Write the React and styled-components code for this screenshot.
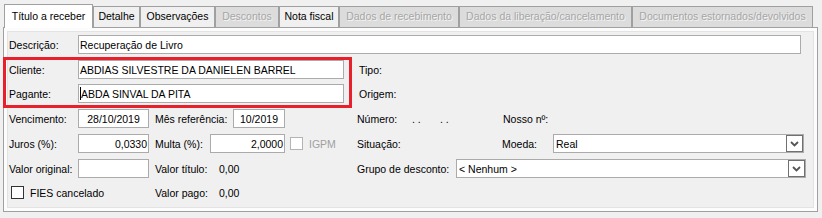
import React from "react";
import styled, { createGlobalStyle } from "styled-components";

const GlobalStyle = createGlobalStyle`
  body {
    margin: 0;
    background: #f0f0f0;
    font-family: "Liberation Sans", Arial, sans-serif;
    font-size: 10.5px;
    color: #000;
  }
`

const Tela = styled.div`
  position: relative;
  width: 822px;
  height: 218px;
  box-sizing: border-box;
  padding: 4px 0 0 3px;
`

const BarraAbas = styled.div`
  display: flex;
  align-items: flex-end;
  height: 23px;
  padding-left: 1px;
  position: relative;
  z-index: 1;
`

const Aba = styled.div`
  box-sizing: border-box;
  width: ${(p) => p.$w}px;
  height: ${(p) => (p.$ativa ? 24 : 21)}px;
  margin-bottom: ${(p) => (p.$ativa ? -1 : 0)}px;
  border: 1px solid #a0a0a0;
  border-bottom: none;
  background: ${(p) => (p.$ativa ? "#ffffff" : p.$desabilitada ? "#dcdcdc" : "#f0f0f0")};
  color: ${(p) => (p.$desabilitada ? "#a6a6a6" : "#000")};
  text-shadow: ${(p) => (p.$desabilitada ? "1px 1px 0 #f4f4f4" : "none")};
  display: flex;
  align-items: center;
  justify-content: center;
  padding-bottom: 2px;
  white-space: nowrap;
`

const Painel = styled.div`
  box-sizing: border-box;
  width: 815px;
  height: 185px;
  border: 1px solid #a0a0a0;
  padding: 3px;
  background: #fcfcfc;
`

const Conteudo = styled.div`
  box-sizing: border-box;
  height: 100%;
  border: 1px solid #e3e3e3;
  background: #f0f0f0;
  padding: 3px 0 0 1px;
  display: flex;
  flex-direction: column;
  gap: 6px;
`

const Linha = styled.div`
  display: flex;
  align-items: center;
  height: 19px;
  margin-top: ${(p) => (p.$justa ? -1 : 0)}px;
`

const Rotulo = styled.span`
  box-sizing: border-box;
  width: ${(p) => (p.$w ? `${p.$w}px` : "auto")};
  margin-left: ${(p) => p.$ml || 0}px;
  color: ${(p) => (p.$desabilitado ? "#a0a0a0" : "#000")};
  white-space: nowrap;
  flex-shrink: 0;
`

const Campo = styled.div`
  box-sizing: border-box;
  width: ${(p) => p.$w}px;
  height: 19px;
  border: 1px solid #ababab;
  background: #fff;
  display: flex;
  align-items: center;
  justify-content: ${(p) =>
    p.$alinha === "direita" ? "flex-end" : p.$alinha === "centro" ? "center" : "flex-start"};
  padding: 0 1px;
  white-space: nowrap;
  overflow: hidden;
  flex-shrink: 0;
`

const Cursor = styled.span`
  display: inline-block;
  width: 1px;
  height: 13px;
  background: #000;
`

const Combo = styled.div`
  box-sizing: border-box;
  width: ${(p) => p.$w}px;
  height: 19px;
  border: 1px solid #ababab;
  background: #fff;
  display: flex;
  align-items: center;
  padding-left: 2px;
  flex-shrink: 0;
`

const BotaoCombo = styled.div`
  box-sizing: border-box;
  width: 17px;
  height: 17px;
  margin-left: auto;
  border: 1px solid #707070;
  background: #fff;
  display: flex;
  align-items: center;
  justify-content: center;
`

const Caixa = styled.div`
  box-sizing: border-box;
  width: 13px;
  height: 13px;
  margin-left: ${(p) => p.$ml || 0}px;
  border: 1px solid ${(p) => (p.$desabilitada ? "#b4b4b4" : "#333")};
  background: #fff;
  flex-shrink: 0;
`

const Destaque = styled.div`
  position: absolute;
  left: 3px;
  top: 57px;
  width: 349px;
  height: 51px;
  box-sizing: border-box;
  border: 3px solid #e8202b;
  pointer-events: none;
`

const abas = [
  { nome: "Título a receber", w: 89, ativa: true },
  { nome: "Detalhe", w: 47 },
  { nome: "Observações", w: 75 },
  { nome: "Descontos", w: 64, desabilitada: true },
  { nome: "Nota fiscal", w: 60 },
  { nome: "Dados de recebimento", w: 120, desabilitada: true },
  { nome: "Dados da liberação/cancelamento", w: 173, desabilitada: true },
  { nome: "Documentos estornados/devolvidos", w: 181, desabilitada: true },
]

const Seta = () => (
  <svg width="9" height="6" viewBox="0 0 9 6">
    <polyline points="1,1 4.5,4.5 8,1" fill="none" stroke="#555" strokeWidth="1.8" />
  </svg>
)

export default function App() {
  return (
    <Tela>
      <GlobalStyle />
      <BarraAbas>
        {abas.map((a) => (
          <Aba key={a.nome} $w={a.w} $ativa={a.ativa} $desabilitada={a.desabilitada}>
            {a.nome}
          </Aba>
        ))}
      </BarraAbas>

      <Painel>
        <Conteudo>
          <Linha>
            <Rotulo $w={69}>Descrição:</Rotulo>
            <Campo $w={723}>Recuperação de Livro</Campo>
          </Linha>

          <Linha>
            <Rotulo $w={69}>Cliente:</Rotulo>
            <Campo $w={266}>ABDIAS SILVESTRE DA DANIELEN BARREL</Campo>
            <Rotulo $ml={15}>Tipo:</Rotulo>
          </Linha>

          <Linha $justa>
            <Rotulo $w={69}>Pagante:</Rotulo>
            <Campo $w={266}>
              <Cursor />
              ABDA SINVAL DA PITA
            </Campo>
            <Rotulo $ml={15}>Origem:</Rotulo>
          </Linha>

          <Linha>
            <Rotulo $w={69}>Vencimento:</Rotulo>
            <Campo $w={71} $alinha="centro">28/10/2019</Campo>
            <Rotulo $w={78} $ml={6}>Mês referência:</Rotulo>
            <Campo $w={52} $alinha="centro">10/2019</Campo>
            <Rotulo $w={55} $ml={72}>Número:</Rotulo>
            <Rotulo $w={28}>. .</Rotulo>
            <Rotulo $w={63}>. .</Rotulo>
            <Rotulo>Nosso nº:</Rotulo>
          </Linha>

          <Linha>
            <Rotulo $w={69}>Juros (%):</Rotulo>
            <Campo $w={71} $alinha="direita">0,0330</Campo>
            <Rotulo $w={55} $ml={6}>Multa (%):</Rotulo>
            <Campo $w={75} $alinha="direita">2,0000</Campo>
            <Caixa $ml={5} $desabilitada />
            <Rotulo $w={48} $ml={6} $desabilitado>IGPM</Rotulo>
            <Rotulo $w={145}>Situação:</Rotulo>
            <Rotulo $w={51}>Moeda:</Rotulo>
            <Combo $w={251}>
              Real
              <BotaoCombo><Seta /></BotaoCombo>
            </Combo>
          </Linha>

          <Linha>
            <Rotulo $w={69}>Valor original:</Rotulo>
            <Campo $w={71} />
            <Rotulo $w={64} $ml={6}>Valor título:</Rotulo>
            <Rotulo $w={138}>0,00</Rotulo>
            <Rotulo $w={99}>Grupo de desconto:</Rotulo>
            <Combo $w={350}>
              &lt; Nenhum &gt;
              <BotaoCombo><Seta /></BotaoCombo>
            </Combo>
          </Linha>

          <Linha $justa>
            <Caixa $ml={2} />
            <Rotulo $w={125} $ml={6}>FIES cancelado</Rotulo>
            <Rotulo $w={64}>Valor pago:</Rotulo>
            <Rotulo>0,00</Rotulo>
          </Linha>
        </Conteudo>
      </Painel>

      <Destaque />
    </Tela>
  )
}
